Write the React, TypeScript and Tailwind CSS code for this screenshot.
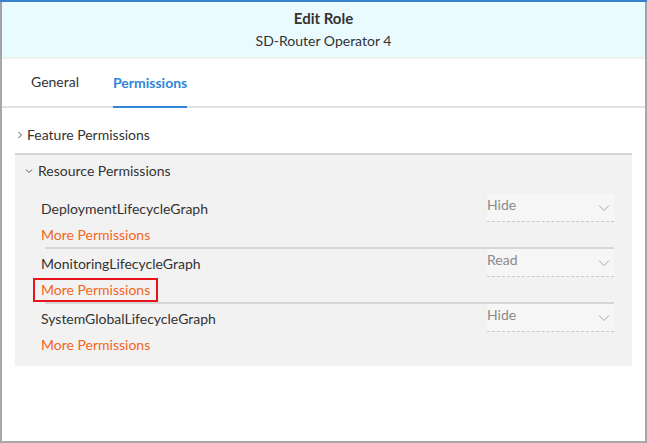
import React from "react";

function Chevron({ dir }: { dir: "right" | "down" }) {
  return (
    <svg width="10" height="10" viewBox="0 0 10 10" className="shrink-0 text-[#555]">
      {dir === "right" ? (
        <path d="M3.5 2 L6.5 5 L3.5 8" fill="none" stroke="currentColor" strokeWidth="1" />
      ) : (
        <path d="M2 3.5 L5 6.5 L8 3.5" fill="none" stroke="currentColor" strokeWidth="1" />
      )}
    </svg>
  );
}

function Caret() {
  return (
    <svg width="12" height="8" viewBox="0 0 12 8" className="shrink-0 text-[#aaa]">
      <path d="M1 1.5 L6 6.5 L11 1.5" fill="none" stroke="currentColor" strokeWidth="1" />
    </svg>
  );
}

const rows = [
  { name: "DeploymentLifecycleGraph", value: "Hide" },
  { name: "MonitoringLifecycleGraph", value: "Read", boxed: true },
  { name: "SystemGlobalLifecycleGraph", value: "Hide" },
];

export default function App() {
  return (
    <div
      className="h-[443px] w-[647px] border-2 border-t-0 border-[#a8a8a8] bg-white text-[#333]"
      style={{ fontFamily: "Lato, 'Noto Sans', sans-serif" }}
    >
      <div className="-mx-[2px] h-[2px] bg-[#3b82d0]" />
      {/* header */}
      <div className="flex h-[55px] flex-col items-center justify-center bg-[#e9fbff] shadow-[0_1px_3px_rgba(0,0,0,0.12)]">
        <div className="text-[15px] font-bold leading-5">Edit Role</div>
        <div className="mt-[3px] text-[14px] leading-5">SD-Router Operator 4</div>
      </div>
      {/* tabs */}
      <div className="flex h-[51px] items-stretch gap-[34px] border-b-2 border-[#e2e2e2] px-[29px] text-[14px]">
        <div className="flex items-center">General</div>
        <div className="-mb-[2px] flex items-center border-b-2 border-[#2f86d6] pt-[2px] font-bold text-[#2f86d6]">
          Permissions
        </div>
      </div>
      <div className="px-[13px] pt-[17px]">
        <div className="flex items-center gap-[2px] pb-[8px] text-[14px] leading-5">
          <Chevron dir="right" />
          <span>Feature Permissions</span>
        </div>
        <div className="border-t-2 border-[#d6d6d6] bg-[#f2f2f2] pb-[9px]">
          <div className="flex items-center gap-[4px] px-[9px] pt-[6px] text-[14px] leading-5">
            <Chevron dir="down" />
            <span>Resource Permissions</span>
          </div>
          <div className="mt-[13px] pl-[26px] pr-[18px] text-[14px] leading-5">
            {rows.map((r, i) => (
              <div
                key={r.name}
                className={`flex items-start justify-between ${i < 2 ? "border-b-2 border-[#d6d6d6] ml-[4px] -mr-[0px]" : "ml-[4px]"}`}
              >
                <div className="-ml-[4px] pb-[2px]">
                  <div className="pt-[5px]">{r.name}</div>
                  <div className="mt-[6px]">
                    <span
                      className={`inline-block text-[#f26522] ${
                        r.boxed ? "-my-[2px] -ml-[8px] border-2 border-[#e8141b] px-[6px]" : ""
                      }`}
                    >
                      More Permissions
                    </span>
                  </div>
                </div>
                <div className="flex h-[28px] w-[127px] items-center justify-between border-b border-dashed border-[#c8c8c8] bg-[#f6f6f6] pr-[4px] text-[#8a8a8a]">
                  <span className="-mt-[6px]">{r.value}</span>
                  <Caret />
                </div>
              </div>
            ))}
          </div>
        </div>
      </div>
    </div>
  );
}
